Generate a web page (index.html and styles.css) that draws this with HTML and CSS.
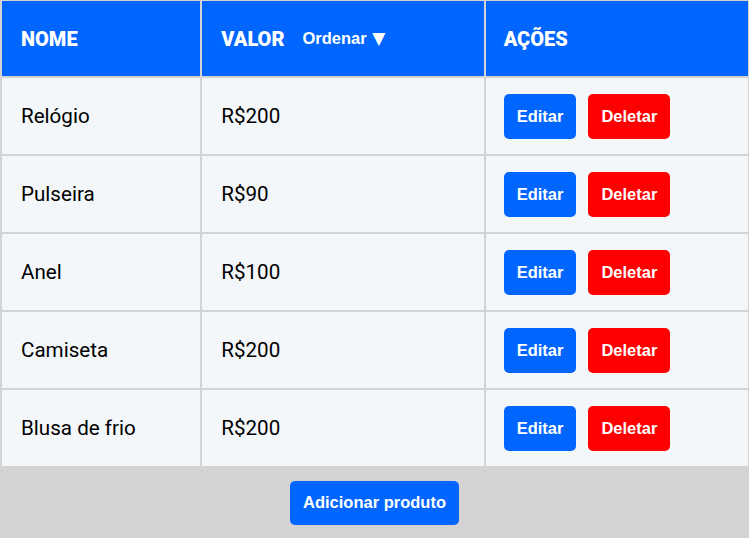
FILE: index.html
```html
<!DOCTYPE html>
<html lang="pt-BR">
<head>
<meta charset="utf-8">
<title>Produtos</title>
<link rel="stylesheet" href="styles.css">
</head>
<body>
<main class="page">
  <table class="products">
    <thead>
      <tr>
        <th class="col-name">NOME</th>
        <th class="col-value">
          <div class="value-head">
            <span>VALOR</span>
            <button class="btn btn-sort" type="button">Ordenar <span class="caret">▼</span></button>
          </div>
        </th>
        <th class="col-actions">AÇÕES</th>
      </tr>
    </thead>
    <tbody>
      <tr>
        <td class="text">Relógio</td>
        <td class="text">R$200</td>
        <td><div class="actions"><button class="btn btn-edit" type="button">Editar</button><button class="btn btn-delete" type="button">Deletar</button></div></td>
      </tr>
      <tr>
        <td class="text">Pulseira</td>
        <td class="text">R$90</td>
        <td><div class="actions"><button class="btn btn-edit" type="button">Editar</button><button class="btn btn-delete" type="button">Deletar</button></div></td>
      </tr>
      <tr>
        <td class="text">Anel</td>
        <td class="text">R$100</td>
        <td><div class="actions"><button class="btn btn-edit" type="button">Editar</button><button class="btn btn-delete" type="button">Deletar</button></div></td>
      </tr>
      <tr>
        <td class="text">Camiseta</td>
        <td class="text">R$200</td>
        <td><div class="actions"><button class="btn btn-edit" type="button">Editar</button><button class="btn btn-delete" type="button">Deletar</button></div></td>
      </tr>
      <tr>
        <td class="text">Blusa de frio</td>
        <td class="text">R$200</td>
        <td><div class="actions"><button class="btn btn-edit" type="button">Editar</button><button class="btn btn-delete" type="button">Deletar</button></div></td>
      </tr>
    </tbody>
  </table>
  <div class="footer">
    <button class="btn btn-add" type="button">Adicionar produto</button>
  </div>
</main>
</body>
</html>
```

FILE: styles.css
```css
html, body {
  margin: 0;
  padding: 0;
  background: #d3d3d3;
  overflow: hidden;
}

.page {
  margin-top: -1px;
  font-family: Roboto, "Liberation Sans", Arial, sans-serif;
}

.products {
  border-collapse: separate;
  border-spacing: 2px;
  width: 750px;
  table-layout: fixed;
}

.col-name { width: 198px; }
.col-value { width: 281px; }
.col-actions { width: 262px; }

.products th {
  background: #0066ff;
  color: #fff;
  font-weight: 900;
  font-size: 20px;
  text-align: left;
  height: 75px;
  padding: 0 18px 0 19px;
  box-sizing: border-box;
}

.products td {
  background: #f4f7fa;
  color: #000;
  font-size: 20.6px;
  height: 76px;
  padding: 0 18px;
  box-sizing: border-box;
}

.products td.text {
  padding-left: 19px;
}

.products th.col-actions {
  padding-left: 18px;
}

.value-head {
  display: flex;
  align-items: center;
  gap: 5px;
}

.actions {
  display: flex;
  gap: 12px;
}

.btn {
  font-family: "Liberation Sans", Arial, sans-serif;
  font-weight: 700;
  font-size: 16.5px;
  line-height: 19px;
  padding: 13px 13px;
  border: none;
  border-radius: 5px;
  color: #fff;
  cursor: pointer;
}

.btn-sort {
  background: transparent;
  padding: 0 13px;
}

.caret {
  font-family: "DejaVu Sans", sans-serif;
  font-size: 17px;
  margin-left: 1px;
}

.btn-edit { background: #0066ff; }
.btn-delete { background: #ff0000; }

.footer {
  display: flex;
  justify-content: center;
  padding-top: 13px;
}

.btn-add {
  background: #0066ff;
  padding: 12px 13px 13px;
}
```
